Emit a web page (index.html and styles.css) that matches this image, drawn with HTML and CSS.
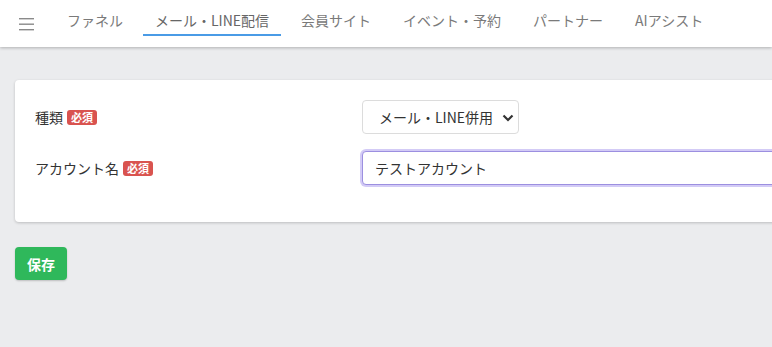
FILE: index.html
```html
<!DOCTYPE html>
<html lang="ja">
<head>
    <meta charset="UTF-8">
    <title>アカウント設定</title>
    <link rel="stylesheet" href="styles.css">
</head>
<body>
    <header class="topbar">
        <button class="menu-btn" aria-label="メニュー">
            <svg width="16" height="14" viewBox="0 0 16 14">
                <rect x="0" y="1" width="15" height="1.4" fill="#8a8a8a"/>
                <rect x="0" y="6.5" width="15" height="1.4" fill="#8a8a8a"/>
                <rect x="0" y="12" width="15" height="1.4" fill="#8a8a8a"/>
            </svg>
        </button>
        <nav class="tabs">
            <a class="tab">ファネル</a>
            <a class="tab active">メール・LINE配信</a>
            <a class="tab">会員サイト</a>
            <a class="tab">イベント・予約</a>
            <a class="tab">パートナー</a>
            <a class="tab">AIアシスト</a>
        </nav>
    </header>

    <main class="content">
        <div class="card">
            <div class="form-row">
                <label class="form-label" for="kind">種類 <span class="badge">必須</span></label>
                <div class="select-wrap">
                    <select id="kind" class="form-select">
                        <option>メール・LINE併用</option>
                        <option>メールのみ</option>
                        <option>LINEのみ</option>
                    </select>
                    <svg class="chevron" width="12" height="8" viewBox="0 0 12 8">
                        <path d="M1.5 1.5 L6 6 L10.5 1.5" fill="none" stroke="#333" stroke-width="2.2"/>
                    </svg>
                </div>
            </div>
            <div class="form-row">
                <label class="form-label" for="account">アカウント名 <span class="badge">必須</span></label>
                <input id="account" class="form-input focused" type="text" value="テストアカウント">
            </div>
        </div>

        <button class="btn-save">保存</button>
    </main>
</body>
</html>
```

FILE: styles.css
```css
* {
    margin: 0;
    padding: 0;
    box-sizing: border-box;
}
html, body {
    overflow: hidden;
}
body {
    font-family: "Noto Sans CJK JP", "Noto Sans", sans-serif;
    background-color: #ebecee;
    color: #333;
    min-height: 100vh;
}
.topbar {
    height: 47px;
    background-color: #fff;
    display: flex;
    align-items: flex-start;
    box-shadow: 0 1px 3px rgba(0,0,0,0.25);
    position: relative;
}
.menu-btn {
    border: none;
    background: none;
    width: 55px;
    height: 36px;
    padding: 14px 0 0 19px;
    text-align: left;
}
.tabs {
    display: flex;
    gap: 8px;
}
.tab {
    display: block;
    padding: 8px 12px 0;
    height: 36px;
    font-size: 14px;
    line-height: 24px;
    color: #7a7a7a;
    border-bottom: 2px solid transparent;
    cursor: pointer;
    white-space: nowrap;
}
.tab.active {
    color: #666;
    border-bottom-color: #4a9be6;
}
.content {
    padding: 33px 0 0 15px;
    width: 1100px;
}
.card {
    background-color: #fff;
    border-radius: 4px;
    box-shadow: 0 1px 3px rgba(0,0,0,0.2);
    padding: 20px 20px 37px;
}
.form-row {
    display: grid;
    grid-template-columns: 327px 1fr;
    align-items: center;
    margin-bottom: 17px;
}
.form-row:last-child {
    margin-bottom: 0;
}
.form-label {
    font-size: 14px;
    color: #333;
    display: flex;
    align-items: center;
    gap: 4px;
}
.badge {
    display: inline-block;
    background-color: #d9534f;
    color: #fff;
    font-size: 11px;
    font-weight: 700;
    line-height: 15px;
    padding: 0 4px;
    border-radius: 3px;
}
.select-wrap {
    position: relative;
    width: 157px;
}
.form-select {
    appearance: none;
    width: 157px;
    height: 34px;
    padding: 0 20px 0 16px;
    font-family: inherit;
    font-size: 14px;
    color: #333;
    background-color: #fff;
    border: 1px solid #dcdcdc;
    border-radius: 4px;
}
.chevron {
    position: absolute;
    right: 5px;
    top: 14px;
    pointer-events: none;
}
.form-input {
    width: 100%;
    height: 34px;
    padding: 0 12px;
    font-family: inherit;
    font-size: 14px;
    color: #333;
    border: 1px solid #dcdcdc;
    border-radius: 4px;
}
.form-input.focused {
    border-color: #9c8fe0;
    box-shadow: 0 0 0 2px #d3cbf6;
    outline: none;
}
.btn-save {
    margin-top: 25px;
    width: 52px;
    height: 33px;
    background-color: #2fb85b;
    color: #fff;
    border: none;
    border-radius: 4px;
    font-family: inherit;
    font-size: 14px;
    font-weight: 700;
    box-shadow: 0 1px 2px rgba(0,0,0,0.2);
    cursor: pointer;
}
```
